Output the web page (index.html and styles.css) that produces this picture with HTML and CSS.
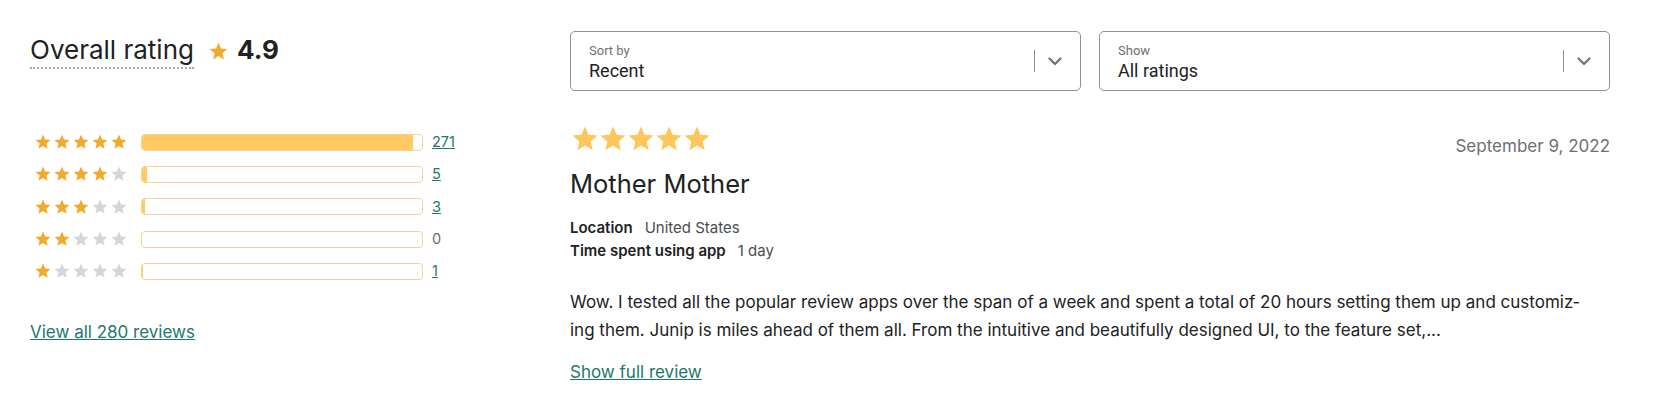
FILE: index.html
```html
<!DOCTYPE html>
<html lang="en">
<head>
<meta charset="utf-8">
<title>Reviews</title>
<link rel="stylesheet" href="styles.css">
</head>
<body>
<svg class="defs" width="0" height="0" aria-hidden="true">
  <symbol id="star" viewBox="0 0 24 24"><path d="M12 17.27L18.18 21l-1.64-7.03L22 9.24l-7.19-.61L12 2 9.19 8.63 2 9.24l5.46 4.73L5.82 21z"/></symbol>
  <symbol id="chev" viewBox="0 0 14 9"><path d="M1.5 1.5L7 7l5.5-5.5" fill="none" stroke="currentColor" stroke-width="2.2" stroke-linecap="round" stroke-linejoin="round"/></symbol>
</svg>
<div class="page">
  <aside class="summary">
    <h2 class="overall">
      <span class="overall-label">Overall rating</span>
      <svg class="overall-star"><use href="#star"/></svg>
      <span class="score">4.9</span>
    </h2>
    <ul class="dist">
      <li class="dist-row">
        <span class="stars-sm"><svg class="on"><use href="#star"/></svg><svg class="on"><use href="#star"/></svg><svg class="on"><use href="#star"/></svg><svg class="on"><use href="#star"/></svg><svg class="on"><use href="#star"/></svg></span>
        <span class="bar"><span class="fill" style="width:96.8%"></span></span>
        <a class="count" href="#">271</a>
      </li>
      <li class="dist-row">
        <span class="stars-sm"><svg class="on"><use href="#star"/></svg><svg class="on"><use href="#star"/></svg><svg class="on"><use href="#star"/></svg><svg class="on"><use href="#star"/></svg><svg class="off"><use href="#star"/></svg></span>
        <span class="bar"><span class="fill" style="width:1.8%"></span></span>
        <a class="count" href="#">5</a>
      </li>
      <li class="dist-row">
        <span class="stars-sm"><svg class="on"><use href="#star"/></svg><svg class="on"><use href="#star"/></svg><svg class="on"><use href="#star"/></svg><svg class="off"><use href="#star"/></svg><svg class="off"><use href="#star"/></svg></span>
        <span class="bar"><span class="fill" style="width:1.1%"></span></span>
        <a class="count" href="#">3</a>
      </li>
      <li class="dist-row">
        <span class="stars-sm"><svg class="on"><use href="#star"/></svg><svg class="on"><use href="#star"/></svg><svg class="off"><use href="#star"/></svg><svg class="off"><use href="#star"/></svg><svg class="off"><use href="#star"/></svg></span>
        <span class="bar"><span class="fill" style="width:0%"></span></span>
        <span class="count zero">0</span>
      </li>
      <li class="dist-row">
        <span class="stars-sm"><svg class="on"><use href="#star"/></svg><svg class="off"><use href="#star"/></svg><svg class="off"><use href="#star"/></svg><svg class="off"><use href="#star"/></svg><svg class="off"><use href="#star"/></svg></span>
        <span class="bar"><span class="fill" style="width:0.36%"></span></span>
        <a class="count" href="#">1</a>
      </li>
    </ul>
    <a class="view-all" href="#">View all 280 reviews</a>
  </aside>

  <main class="reviews">
    <div class="filters">
      <div class="select">
        <div class="select-text">
          <span class="select-label">Sort by</span>
          <span class="select-value">Recent</span>
        </div>
        <span class="select-divider"></span>
        <svg class="select-chev"><use href="#chev"/></svg>
      </div>
      <div class="select">
        <div class="select-text">
          <span class="select-label">Show</span>
          <span class="select-value">All ratings</span>
        </div>
        <span class="select-divider"></span>
        <svg class="select-chev"><use href="#chev"/></svg>
      </div>
    </div>

    <article class="review">
      <div class="review-head">
        <span class="stars-lg"><svg><use href="#star"/></svg><svg><use href="#star"/></svg><svg><use href="#star"/></svg><svg><use href="#star"/></svg><svg><use href="#star"/></svg></span>
        <time class="review-date">September 9, 2022</time>
      </div>
      <h3 class="reviewer">Mother Mother</h3>
      <div class="meta">
        <div class="meta-row"><span class="meta-key">Location</span><span class="meta-val">United States</span></div>
        <div class="meta-row"><span class="meta-key">Time spent using app</span><span class="meta-val">1 day</span></div>
      </div>
      <p class="review-body">Wow. I tested all the popular review apps over the span of a week and spent a total of 20 hours setting them up and customiz&shy;ing them. Junip is miles ahead of them all. From the intuitive and beautifully designed UI, to the feature set,...</p>
      <a class="show-full" href="#">Show full review</a>
    </article>
  </main>
</div>
</body>
</html>
```

FILE: styles.css
```css
html, body {
  margin: 0;
  background: #ffffff;
}

body {
  font-family: Inter, "Noto Sans", sans-serif;
  color: #202223;
}

.defs {
  position: absolute;
  width: 0;
  height: 0;
}

.page {
  display: grid;
  grid-template-columns: 508px 1040px;
  column-gap: 32px;
  padding: 0 50px 0 30px;
}

/* ---------- summary ---------- */
.summary {
  padding-top: 34px;
}

.overall {
  display: flex;
  align-items: flex-start;
  margin: 0;
  font-size: 26px;
  font-weight: 400;
  line-height: 32px;
  color: #202223;
}

.overall-label {
  padding-bottom: 1px;
  border-bottom: 2px dotted #a6a8ab;
}

.overall-star {
  width: 21px;
  height: 21px;
  margin: 7px 8px 0 14px;
  fill: #f1aa2c;
}

.score {
  font-weight: 700;
}

.dist {
  list-style: none;
  margin: 57px 0 0;
  padding: 0;
}

.dist-row {
  display: flex;
  align-items: center;
  height: 32.3px;
}

.stars-sm {
  display: flex;
  gap: 1px;
  margin-left: 4px;
}

.stars-sm svg {
  width: 18px;
  height: 18px;
}

.stars-sm .on {
  fill: #f1aa2c;
}

.stars-sm .off {
  fill: #d4d6da;
}

.bar {
  display: flex;
  box-sizing: border-box;
  width: 282px;
  height: 17px;
  margin-left: 13px;
  border: 1px solid #f5d58f;
  border-radius: 4px;
  overflow: hidden;
  background: #ffffff;
}

.fill {
  height: 100%;
  background: #ffc964;
}

.count {
  margin-left: 9px;
  font-size: 14.5px;
  line-height: 20px;
  color: #21786b;
  text-decoration: underline;
}

.count.zero {
  color: #6d7175;
  text-decoration: none;
}

.view-all {
  display: inline-block;
  margin-top: 33px;
  font-size: 17px;
  line-height: 24px;
  color: #21786b;
  text-decoration: underline;
}

/* ---------- reviews ---------- */
.reviews {
  padding-top: 31px;
}

.filters {
  display: grid;
  grid-template-columns: 1fr 1fr;
  gap: 18px;
}

.select {
  display: flex;
  align-items: center;
  box-sizing: border-box;
  height: 60px;
  padding: 0 18px;
  border: 1px solid #8c9196;
  border-radius: 5px;
  font-family: Roboto, "Liberation Sans", sans-serif;
}

.select-text {
  flex: 1;
  display: flex;
  flex-direction: column;
  padding-top: 2px;
}

.select-label {
  font-size: 13px;
  line-height: 15px;
  color: #6d7175;
}

.select-value {
  margin-top: 2px;
  font-size: 18px;
  line-height: 22px;
  color: #202223;
}

.select-divider {
  width: 1px;
  height: 22px;
  background: #8c9196;
}

.select-chev {
  width: 14px;
  height: 9px;
  margin-left: 13px;
  color: #6d7175;
}

.review {
  margin-top: 33px;
}

.review-head {
  display: flex;
  justify-content: space-between;
  align-items: flex-start;
}

.stars-lg {
  display: flex;
}

.stars-lg svg {
  width: 30px;
  height: 30px;
  fill: #ffc65c;
}

.stars-lg svg + svg {
  margin-left: -2px;
}

.review-date {
  margin-top: 12px;
  font-size: 17px;
  line-height: 20px;
  color: #6d7175;
}

.reviewer {
  margin: 13px 0 0;
  font-size: 25.5px;
  font-weight: 400;
  line-height: 30px;
  color: #202223;
}

.meta {
  margin-top: 17px;
  font-size: 15px;
  line-height: 23px;
}

.meta-row {
  display: flex;
  gap: 12px;
}

.meta-key {
  font-weight: 600;
  color: #202223;
}

.meta-val {
  color: #4a4d50;
}

.review-body {
  max-width: 1018px;
  margin: 26px 0 0;
  font-size: 17px;
  line-height: 28px;
  color: #202223;
  hyphens: manual;
}

.show-full {
  display: inline-block;
  margin-top: 16px;
  font-size: 17px;
  line-height: 24px;
  color: #21786b;
  text-decoration: underline;
}
```
